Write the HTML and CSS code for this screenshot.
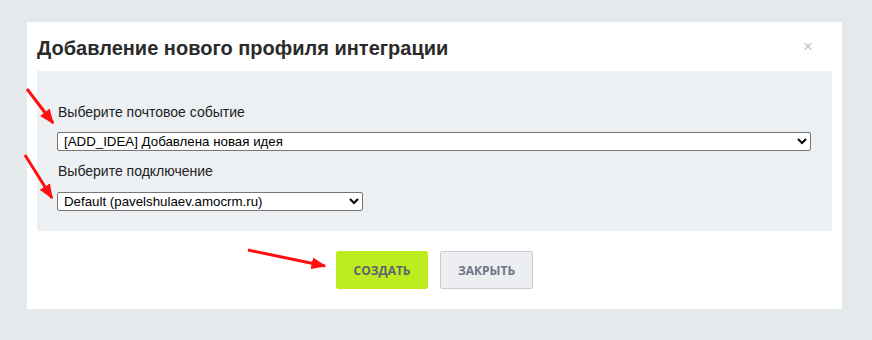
FILE: index.html
```html
<!DOCTYPE html>
<html lang="ru">
<head>
    <meta charset="UTF-8">
    <title>Добавление нового профиля интеграции</title>
    <link rel="stylesheet" href="styles.css">
</head>
<body>
    <div class="modal">
        <div class="modal-header">
            <h1>Добавление нового профиля интеграции</h1>
            <span class="close">&times;</span>
        </div>
        <div class="modal-body">
            <label class="field-label" for="event">Выберите почтовое событие</label>
            <select id="event" class="select-wide">
                <option>[ADD_IDEA] Добавлена новая идея</option>
            </select>
            <label class="field-label second" for="conn">Выберите подключение</label>
            <select id="conn" class="select-short">
                <option>Default (pavelshulaev.amocrm.ru)</option>
            </select>
        </div>
        <div class="modal-footer">
            <button class="btn btn-create">Создать</button>
            <button class="btn btn-close">Закрыть</button>
        </div>
    </div>

    <svg class="arrows" width="872" height="340" viewBox="0 0 872 340">
        <defs>
            <marker id="head" markerWidth="5" markerHeight="4" refX="4.5" refY="2" orient="auto" markerUnits="strokeWidth">
                <path d="M0,0 L5,2 L0,4 Z" fill="#ff1010"/>
            </marker>
        </defs>
        <line x1="27" y1="89" x2="53" y2="123" stroke="#ff1010" stroke-width="3" marker-end="url(#head)"/>
        <line x1="25" y1="155" x2="52" y2="198" stroke="#ff1010" stroke-width="3" marker-end="url(#head)"/>
        <line x1="248" y1="250" x2="325" y2="266" stroke="#ff1010" stroke-width="3" marker-end="url(#head)"/>
    </svg>
</body>
</html>
```

FILE: styles.css
```css
body {
    margin: 0;
    height: 340px;
    background-color: #e4e9eb;
    font-family: Arial, "Liberation Sans", sans-serif;
    position: relative;
    overflow: hidden;
}
.modal {
    position: absolute;
    left: 27px;
    top: 22px;
    width: 815px;
    background: white;
    padding: 0 10px 20px;
    box-sizing: border-box;
}
.modal-header {
    display: flex;
    justify-content: space-between;
    align-items: flex-start;
    height: 49px;
}
.modal-header h1 {
    margin: 14px 0 0;
    font-size: 20px;
    line-height: 24px;
    font-weight: bold;
    color: #2b2b2b;
}
.close {
    margin: 16px 19px 0 0;
    font-size: 17px;
    line-height: 17px;
    color: #c4c4c4;
}
.modal-body {
    background-color: #edf0f3;
    padding: 33px 21px 20px 20px;
    height: 160px;
    box-sizing: border-box;
}
.field-label {
    display: block;
    font-size: 14px;
    line-height: 16px;
    color: #222;
    margin: 0 0 12px 1px;
}
.field-label.second {
    margin-top: 12px;
    margin-bottom: 13px;
}
select {
    display: block;
    height: 19px;
    padding: 0 2px;
    font-family: Arial, "Liberation Sans", sans-serif;
    font-size: 13.3px;
    color: #000;
    background: white;
    border: 1px solid #767676;
    border-radius: 2px;
    box-sizing: border-box;
}
.select-wide {
    width: 754px;
}
.select-short {
    width: 306px;
}
.modal-footer {
    display: flex;
    justify-content: center;
    gap: 12px;
    padding-top: 20px;
}
.btn {
    height: 38px;
    width: 92px;
    border-radius: 2px;
    font-family: "Open Sans", sans-serif;
    font-size: 12px;
    font-weight: bold;
    text-transform: uppercase;
    color: #5d6270;
    cursor: pointer;
}
.btn-create {
    background-color: #bdec1f;
    border: 1px solid #bdec1f;
}
.btn-close {
    width: 93px;
    background-color: #eceef1;
    border: 1px solid #c9ccd1;
    color: #6e7584;
}
.arrows {
    position: absolute;
    left: 0;
    top: 0;
    pointer-events: none;
}
```
